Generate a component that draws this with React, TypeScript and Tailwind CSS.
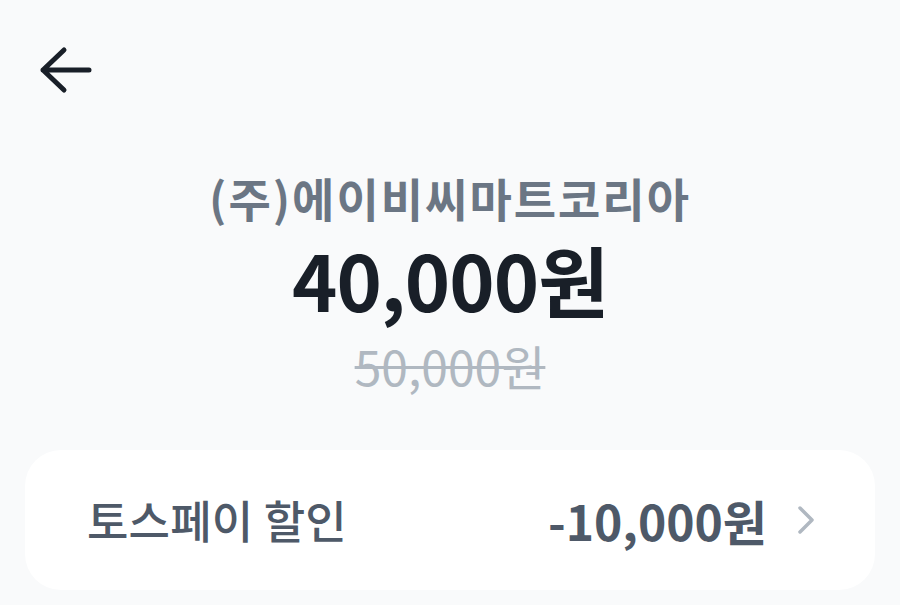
import React from 'react';

const font = "font-['Noto_Sans_CJK_KR','Noto_Sans',sans-serif]";

const BackArrow = () => (
  <svg width="56" height="50" viewBox="0 0 56 50" fill="none">
    <path
      d="M5 25 H51 M26 5 L5 25 L26 45"
      stroke="#191f28"
      strokeWidth="5"
      strokeLinecap="round"
      strokeLinejoin="round"
    />
  </svg>
);

const Chevron = () => (
  <svg width="18" height="30" viewBox="0 0 18 30" fill="none">
    <path
      d="M3 3 L15 15 L3 27"
      stroke="#b0b8c1"
      strokeWidth="3.5"
      strokeLinecap="round"
      strokeLinejoin="round"
    />
  </svg>
);

const App = () => {
  return (
    <div className={`${font} w-[900px] h-[605px] overflow-hidden bg-[#f9fafb] flex flex-col`}>
      {/* Header */}
      <div className="pl-[38px] pt-[45px]">
        <BackArrow />
      </div>

      {/* Merchant + price */}
      <div className="flex flex-col items-center mt-[74px]">
        <p className="text-[46px] leading-[56px] font-semibold text-[#6b7684] tracking-[2px]">
          (주)에이비씨마트코리아
        </p>
        <p className="mt-[10px] text-[77px] leading-[88px] font-bold text-[#191f28] tracking-[-1px]">
          40,000원
        </p>
        <p className="mt-[14px] text-[48px] leading-[56px] font-normal text-[#b0b8c1] line-through decoration-[3px]">
          50,000원
        </p>
      </div>

      {/* Discount card */}
      <div className="mx-[25px] mt-[57px] h-[140px] rounded-[36px] bg-white flex items-center pl-[62px] pr-[60px]">
        <span className="text-[45px] font-medium text-[#4e5968] tracking-[0.2px]">토스페이 할인</span>
        <div className="ml-auto flex items-center gap-[30px]">
          <span className="text-[48px] font-semibold text-[#4e5968] tracking-[0px]">-10,000원</span>
          <Chevron />
        </div>
      </div>
    </div>
  );
};

export default App;
